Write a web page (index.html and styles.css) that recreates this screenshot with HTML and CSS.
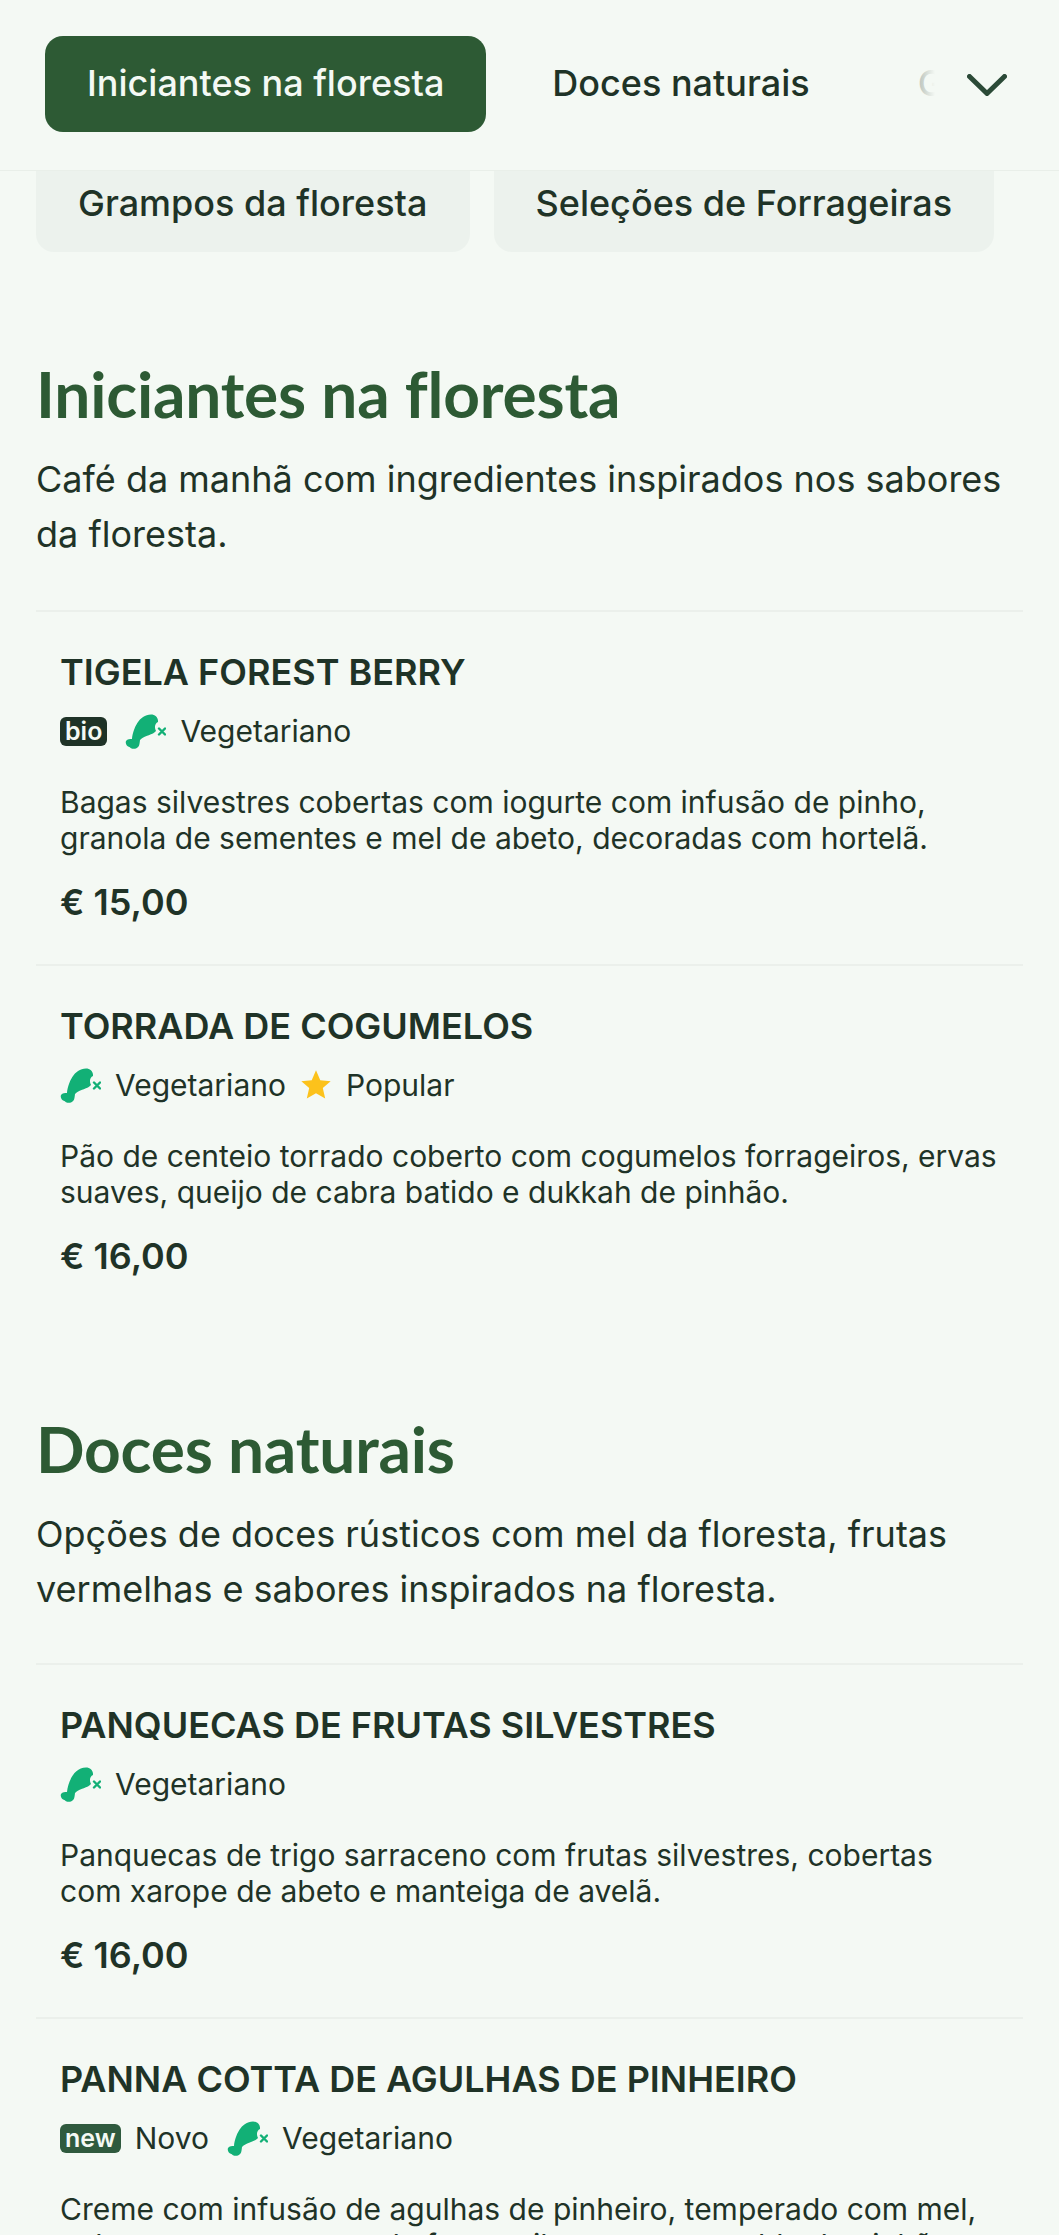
FILE: index.html
```html
<!DOCTYPE html>
<html>

<head>
  <title>Cardápio</title>
  <link rel="stylesheet" href="styles.css">
</head>

<body>
  <svg class="defs" width="0" height="0">
    <symbol id="no-meat" viewBox="0 0 41 35">
      <path fill="#12b076" d="M26 .5C30 .5 33.500 3.500 33 8C30 9.500 29 13 31 17C28 21 20 21 15 26C14.500 30 14.500 33 11 34.500C8 35.500 5 34 4.500 33C2 32.500 0 29.500 1 27C2.500 25 5 25 7 25C8 15 14 .5 26 .5Z"/>
      <path stroke="#12b076" stroke-width="2.400" stroke-linecap="round" d="M34 14.500L40 20.500M40 14.500L34 20.500"/>
    </symbol>
  </svg>

  <main>
    <header class="tabbar">
      <nav class="tabs">
        <a class="tab active">Iniciantes na floresta</a>
        <a class="tab">Doces naturais</a>
        <a class="tab">Grampos da floresta</a>
      </nav>
      <div class="tabs-fade">
        <svg class="chevron" viewBox="0 0 40 22" width="40" height="22">
          <path d="M2.500 2.500L20 19.500L37.500 2.500" fill="none" stroke="#2b4a37" stroke-width="5" stroke-linecap="round" stroke-linejoin="round"/>
        </svg>
      </div>
    </header>

    <div class="pills">
      <a class="pill">Grampos da floresta</a>
      <a class="pill">Seleções de Forrageiras</a>
    </div>

    <section class="section first">
      <h2>Iniciantes na floresta</h2>
      <p class="section-desc">Café da manhã com ingredientes inspirados nos sabores da floresta.</p>

      <article class="item">
        <h3>TIGELA FOREST BERRY</h3>
        <div class="tags">
          <span class="badge">bio</span>
          <svg class="icon-meat"><use href="#no-meat"/></svg>
          <span>Vegetariano</span>
        </div>
        <p class="item-desc">Bagas silvestres cobertas com iogurte com infusão de pinho, granola de sementes e mel de abeto, decoradas com hortelã.</p>
        <div class="price">€ 15,00</div>
      </article>

      <article class="item">
        <h3>TORRADA DE COGUMELOS</h3>
        <div class="tags">
          <svg class="icon-meat"><use href="#no-meat"/></svg>
          <span>Vegetariano</span>
          <svg class="icon-star" viewBox="0 0 24 24"><path fill="#fcc21b" d="M12 1l3.200 7.400 7.800.7-5.900 5.200 1.800 7.900L12 18.100l-6.900 4.100 1.800-7.900L1 9.100l7.800-.7z"/></svg>
          <span>Popular</span>
        </div>
        <p class="item-desc">Pão de centeio torrado coberto com cogumelos forrageiros, ervas suaves, queijo de cabra batido e dukkah de pinhão.</p>
        <div class="price">€ 16,00</div>
      </article>
    </section>

    <section class="section">
      <h2>Doces naturais</h2>
      <p class="section-desc">Opções de doces rústicos com mel da floresta, frutas vermelhas e sabores inspirados na floresta.</p>

      <article class="item">
        <h3>PANQUECAS DE FRUTAS SILVESTRES</h3>
        <div class="tags">
          <svg class="icon-meat"><use href="#no-meat"/></svg>
          <span>Vegetariano</span>
        </div>
        <p class="item-desc">Panquecas de trigo sarraceno com frutas silvestres, cobertas com xarope de abeto e manteiga de avelã.</p>
        <div class="price">€ 16,00</div>
      </article>

      <article class="item">
        <h3>PANNA COTTA DE AGULHAS DE PINHEIRO</h3>
        <div class="tags">
          <span class="badge green">new</span>
          <span>Novo</span>
          <svg class="icon-meat"><use href="#no-meat"/></svg>
          <span>Vegetariano</span>
        </div>
        <p class="item-desc">Creme com infusão de agulhas de pinheiro, temperado com mel, coberto com compota de frutas silvestres e crumble de pinhão.</p>
        <div class="price">€ 14,00</div>
      </article>
    </section>
  </main>
</body>

</html>
```

FILE: styles.css
```css
html,
body {
  margin: 0;
  padding: 0;
  height: 2235px;
  overflow: hidden;
}

body {
  font-family: Inter, "Liberation Sans", sans-serif;
  background-color: #f4f9f4;
  color: #1f3327;
}

.defs {
  display: block;
  height: 0;
}

/* Top tab bar */
.tabbar {
  position: relative;
  height: 171px;
  box-sizing: border-box;
  border-bottom: 1px solid #e9efe9;
  overflow: hidden;
}

.tabs {
  display: flex;
  align-items: center;
  gap: 24px;
  height: 100%;
  padding-left: 45px;
  padding-bottom: 2px;
  box-sizing: border-box;
  white-space: nowrap;
}

.tab {
  display: block;
  height: 96px;
  line-height: 94px;
  padding: 0 42px;
  border-radius: 18px;
  font-size: 36px;
  font-weight: 500;
}

.tab.active {
  background-color: #2d5a34;
  color: #f4f9f4;
}

.tabs-fade {
  position: absolute;
  top: 0;
  right: 0;
  bottom: 0;
  width: 154px;
  display: flex;
  align-items: center;
  justify-content: flex-end;
  padding-right: 52px;
  box-sizing: border-box;
  background: linear-gradient(to right, rgba(244, 249, 244, 0.5) 0, #f4f9f4 30px);
}

.chevron {
  display: block;
}

/* Second row of category pills, partly behind the bar */
.pills {
  display: flex;
  gap: 24px;
  padding-left: 36px;
}

.pill {
  height: 81px;
  line-height: 64px;
  padding: 0 42px;
  background-color: #ecf2ed;
  border-radius: 0 0 18px 18px;
  font-size: 36px;
  font-weight: 500;
  white-space: nowrap;
}

.section {
  padding: 0 36px;
  margin-top: 91px;
}

.section.first {
  margin-top: 102px;
}

h2 {
  margin: 0;
  font-family: Lato, sans-serif;
  font-size: 64px;
  line-height: 80px;
  font-weight: 700;
  letter-spacing: -0.2px;
  color: #2d5a34;
}

.section-desc {
  margin: 18px 0 46px;
  font-size: 36px;
  line-height: 55px;
  max-width: 987px;
}

.first .section-desc {
  margin-bottom: 48px;
}

.item {
  border-top: 2px solid #ebf0eb;
  padding: 39px 24px 0;
  height: 354px;
  box-sizing: border-box;
}

h3 {
  margin: 0;
  font-size: 36px;
  line-height: 42px;
  font-weight: 600;
}

.tags {
  display: flex;
  align-items: center;
  gap: 14px;
  margin-top: 16px;
  height: 44px;
  font-size: 30px;
}

.tags > * + .icon-meat {
  margin-left: 4px;
}

.badge {
  background-color: #1f3327;
  color: #f4f9f4;
  font-size: 25px;
  font-weight: 600;
  line-height: 29px;
  padding: 0 5px;
  border-radius: 6px;
}

.badge.green {
  background-color: #2f5a3e;
  padding: 0 5px;
}

.icon-meat {
  width: 41px;
  height: 35px;
}

.icon-star {
  width: 32px;
  height: 32px;
}

.item-desc {
  margin: 31px 0 0;
  font-size: 30px;
  line-height: 36px;
}

.price {
  margin-top: 25px;
  font-size: 36px;
  line-height: 42px;
  font-weight: 600;
}
```
